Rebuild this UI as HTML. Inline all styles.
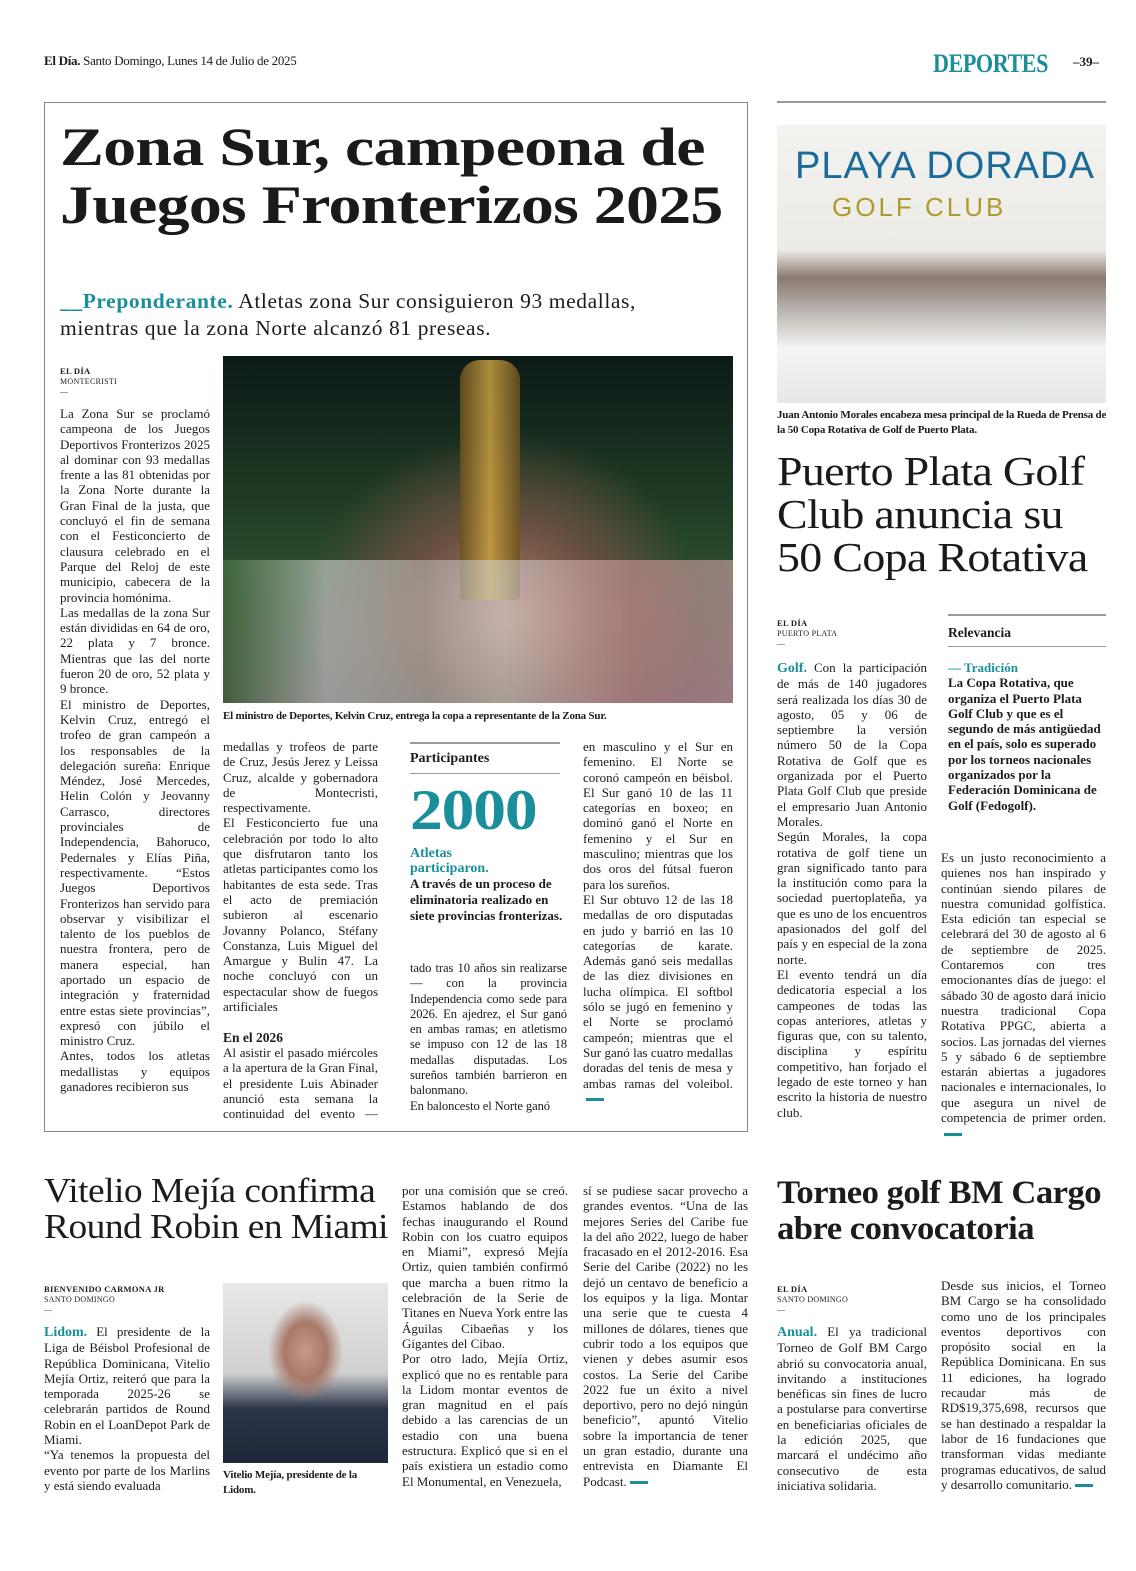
<!DOCTYPE html>
<html><head><meta charset="utf-8">
<style>
*{margin:0;padding:0;box-sizing:border-box}
body{width:1136px;height:1571px;background:#fff;position:relative;overflow:hidden;font-family:"Liberation Serif",serif;color:#1c1c1c}
.a{position:absolute}
.t{font-size:13px;line-height:15.3px;text-align:justify;letter-spacing:0;overflow:hidden;hyphens:auto}
.t p{margin:0}
.tl{color:#1a8f9b;font-weight:bold}
.by{font-size:8px;line-height:10px;letter-spacing:.3px}
.by b{font-size:8.5px}
.cap{font-size:11px;font-weight:bold;line-height:15px;letter-spacing:-0.2px}
.end{display:inline-block;width:18px;height:3px;background:#1a8f9b;vertical-align:middle;margin-left:3px}
.sx{transform-origin:left top;white-space:nowrap}
</style></head><body>

<div class="a" style="left:44px;top:53px;font-size:13px;letter-spacing:-0.3px"><b>El Día.</b> Santo Domingo, Lunes 14 de Julio de 2025</div>
<div class="a" style="left:933px;top:49px;font-size:26px;font-weight:bold;color:#1a8f9b;letter-spacing:-0.5px;transform:scaleX(.85);transform-origin:left">DEPORTES</div>
<div class="a" style="left:1073px;top:54px;font-size:13px;font-weight:bold">–39–</div>

<div class="a" style="left:44px;top:102px;width:704px;height:1030px;border:1px solid #888"></div>
<div class="a" style="left:777px;top:101px;width:329px;height:2px;background:#999"></div>

<div class="a sx" style="left:60px;top:118px;font-size:54px;font-weight:bold;line-height:58px;letter-spacing:-0.6px;color:#1a1a1a;transform:scaleX(1.22)">Zona Sur, campeona de<br>Juegos Fronterizos 2025</div>
<div class="a" style="left:60px;top:288px;width:660px;font-size:21.5px;line-height:27px;letter-spacing:0.6px"><span class="tl" style="color:#1a8f9b">__Preponderante.</span> Atletas zona Sur consiguieron 93 medallas, mientras que la zona Norte alcanzó 81 preseas.</div>

<div class="a by" style="left:60px;top:366px"><b>EL DÍA</b><br>MONTECRISTI<br>—</div>

<div class="a" style="left:223px;top:356px;width:510px;height:347px;background:radial-gradient(ellipse at 55% 75%,#b08070 0%,#6a5040 25%,transparent 50%),linear-gradient(180deg,#0c1a16 0%,#1e3a24 40%,#2a4a2e 60%,#3a3a38 100%)"></div>
<div class="a" style="left:460px;top:360px;width:60px;height:240px;background:linear-gradient(90deg,#6a5020,#c8a040,#6a5020);border-radius:20px 20px 4px 4px;opacity:.85"></div>
<div class="a" style="left:223px;top:560px;width:510px;height:143px;background:linear-gradient(90deg,#4a7a40 0%,#e8e8e8 20%,#c0c0c0 40%,#d8d8d8 55%,#e0a0a8 80%,#e8b0b8 100%);opacity:.55"></div>
<div class="a cap" style="left:223px;top:709px">El ministro de Deportes, Kelvin Cruz, entrega la copa a representante de la Zona Sur.</div>

<div class="a t" style="left:60px;top:406px;width:150px;height:716px">
<p>La Zona Sur se proclamó campeona de los Juegos Deportivos Fronterizos 2025 al dominar con 93 medallas frente a las 81 obtenidas por la Zona Norte durante la Gran Final de la justa, que concluyó el fin de semana con el Festiconcierto de clausura celebrado en el Parque del Reloj de este municipio, cabecera de la provincia homónima.</p>
<p>Las medallas de la zona Sur están divididas en 64 de oro, 22 plata y 7 bronce. Mientras que las del norte fueron 20 de oro, 52 plata y 9 bronce.</p>
<p>El ministro de Deportes, Kelvin Cruz, entregó el trofeo de gran campeón a los responsables de la delegación sureña: Enrique Méndez, José Mercedes, Helin Colón y Jeovanny Carrasco, directores provinciales de Independencia, Bahoruco, Pedernales y Elías Piña, respectivamente. “Estos Juegos Deportivos Fronterizos han servido para observar y visibilizar el talento de los pueblos de nuestra frontera, pero de manera especial, han aportado un espacio de integración y fraternidad entre estas siete provincias”, expresó con júbilo el ministro Cruz.</p>
<p>Antes, todos los atletas medallistas y equipos ganadores recibieron sus</p></div>

<div class="a t" style="left:223px;top:739px;width:155px;height:383px">
<p>medallas y trofeos de parte de Cruz, Jesús Jerez y Leissa Cruz, alcalde y gobernadora de Montecristi, respectivamente.</p>
<p>El Festiconcierto fue una celebración por todo lo alto que disfrutaron tanto los atletas participantes como los habitantes de esta sede. Tras el acto de premiación subieron al escenario Jovanny Polanco, Stéfany Constanza, Luis Miguel del Amargue y Bulin 47. La noche concluyó con un espectacular show de fuegos artificiales</p>
<p>&nbsp;</p>
<p style="font-weight:bold;font-size:13.5px">En el 2026</p>
<p>Al asistir el pasado miércoles a la apertura de la Gran Final, el presidente Luis Abinader anunció esta semana la continuidad del evento —resca-</p></div>

<div class="a" style="left:410px;top:742px;width:150px;height:2px;background:#999"></div>
<div class="a" style="left:410px;top:751px;font-size:14px;font-weight:bold">Participantes</div>
<div class="a" style="left:410px;top:773px;width:150px;height:1px;background:#999"></div>
<div class="a sx" style="left:410px;top:780px;font-size:57px;font-weight:bold;color:#1a8f9b;line-height:62px;letter-spacing:-1px;transform:scaleX(1.15)">2000</div>
<div class="a" style="left:410px;top:846px;width:155px;font-size:14px;line-height:15px;font-weight:bold"><span style="color:#1a8f9b">Atletas<br>participaron.</span><br><span style="font-size:13px">A través de un proceso de eliminatoria realizado en siete provincias fronterizas.</span></div>

<div class="a t" style="left:410px;top:961px;width:157px;height:161px;font-size:12.6px;letter-spacing:-0.1px">
<p>tado tras 10 años sin realizarse— con la provincia Independencia como sede para 2026. En ajedrez, el Sur ganó en ambas ramas; en atletismo se impuso con 12 de las 18 medallas disputadas. Los sureños también barrieron en balonmano.</p>
<p>En baloncesto el Norte ganó</p></div>

<div class="a t" style="left:583px;top:739px;width:150px;height:383px">
<p>en masculino y el Sur en femenino. El Norte se coronó campeón en béisbol. El Sur ganó 10 de las 11 categorías en boxeo; en dominó ganó el Norte en femenino y el Sur en masculino; mientras que los dos oros del fútsal fueron para los sureños.</p>
<p>El Sur obtuvo 12 de las 18 medallas de oro disputadas en judo y barrió en las 10 categorías de karate. Además ganó seis medallas de las diez divisiones en lucha olímpica. El softbol sólo se jugó en femenino y el Norte se proclamó campeón; mientras que el Sur ganó las cuatro medallas doradas del tenis de mesa y ambas ramas del voleibol.<span class="end"></span></p></div>

<!-- right top -->
<div class="a" style="left:777px;top:125px;width:329px;height:278px;background:linear-gradient(180deg,#f2f2ef 0%,#ecebe6 45%,#8a7a70 55%,#c8c4c0 70%,#f4f4f4 80%,#e8e8e8 100%)"></div>
<div class="a" style="left:795px;top:142px;font-family:'Liberation Sans',sans-serif;font-size:38px;color:#1a6a9a;letter-spacing:1px;line-height:48px;white-space:nowrap">PLAYA DORADA</div>
<div class="a" style="left:832px;top:192px;font-family:'Liberation Sans',sans-serif;font-size:26px;color:#b09a30;letter-spacing:3px;white-space:nowrap">GOLF CLUB</div>
<div class="a cap" style="left:777px;top:408px;width:330px">Juan Antonio Morales encabeza mesa principal de la Rueda de Prensa de la 50 Copa Rotativa de Golf de Puerto Plata.</div>
<div class="a sx" style="left:777px;top:450px;font-size:41px;line-height:43px;letter-spacing:-0.6px;color:#1a1a1a;transform:scaleX(1.12)">Puerto Plata Golf<br>Club anuncia su<br>50 Copa Rotativa</div>

<div class="a by" style="left:777px;top:618px"><b>EL DÍA</b><br>PUERTO PLATA<br>—</div>
<div class="a t" style="left:777px;top:660px;width:150px;height:476px">
<p><span class="tl" style="font-size:14px">Golf.</span> Con la participación de más de 140 jugadores será realizada los días 30 de agosto, 05 y 06 de septiembre la versión número 50 de la Copa Rotativa de Golf que es organizada por el Puerto Plata Golf Club que preside el empresario Juan Antonio Morales.</p>
<p>Según Morales, la copa rotativa de golf tiene un gran significado tanto para la institución como para la sociedad puertoplateña, ya que es uno de los encuentros apasionados del golf del país y en especial de la zona norte.</p>
<p>El evento tendrá un día dedicatoria especial a los campeones de todas las copas anteriores, atletas y figuras que, con su talento, disciplina y espíritu competitivo, han forjado el legado de este torneo y han escrito la historia de nuestro club.</p></div>

<div class="a" style="left:948px;top:614px;width:158px;height:2px;background:#999"></div>
<div class="a" style="left:948px;top:625px;font-size:13.5px;font-weight:bold">Relevancia</div>
<div class="a" style="left:948px;top:646px;width:158px;height:1px;background:#999"></div>
<div class="a t" style="left:948px;top:660px;width:158px;height:180px;font-weight:bold;text-align:left;font-size:13px">
<p class="tl">— Tradición</p>
<p>La Copa Rotativa, que organiza el Puerto Plata Golf Club y que es el segundo de más antigüedad en el país, solo es superado por los torneos nacionales organizados por la Federación Dominicana de Golf (Fedogolf).</p></div>
<div class="a t" style="left:941px;top:850px;width:165px;height:286px">
<p>Es un justo reconocimiento a quienes nos han inspirado y continúan siendo pilares de nuestra comunidad golfística. Esta edición tan especial se celebrará del 30 de agosto al 6 de septiembre de 2025. Contaremos con tres emocionantes días de juego: el sábado 30 de agosto dará inicio nuestra tradicional Copa Rotativa PPGC, abierta a socios. Las jornadas del viernes 5 y sábado 6 de septiembre estarán abiertas a jugadores nacionales e internacionales, lo que asegura un nivel de competencia de primer orden.<span class="end"></span></p></div>

<!-- bottom -->
<div class="a sx" style="left:44px;top:1173px;font-size:35px;line-height:36px;letter-spacing:-0.5px;transform:scaleX(1.07)">Vitelio Mejía confirma<br>Round Robin en Miami</div>
<div class="a by" style="left:44px;top:1284px"><b>BIENVENIDO CARMONA JR</b><br>SANTO DOMINGO<br>—</div>
<div class="a t" style="left:44px;top:1324px;width:166px;height:180px">
<p><span class="tl" style="font-size:14px">Lidom.</span> El presidente de la Liga de Béisbol Profesional de República Dominicana, Vitelio Mejía Ortiz, reiteró que para la temporada 2025-26 se celebrarán partidos de Round Robin en el LoanDepot Park de Miami.</p>
<p>“Ya tenemos la propuesta del evento por parte de los Marlins y está siendo evaluada</p></div>
<div class="a" style="left:223px;top:1283px;width:165px;height:180px;background:radial-gradient(ellipse at 50% 38%,#c89a88 0%,#a87868 18%,transparent 32%),linear-gradient(180deg,#e8e8e8 0%,#d0d0d0 50%,#2a3448 70%,#1e2838 100%)"></div>
<div class="a cap" style="left:223px;top:1468px;width:165px">Vitelio Mejía, presidente de la Lidom.</div>

<div class="a t" style="left:402px;top:1183px;width:166px;height:320px">
<p>por una comisión que se creó. Estamos hablando de dos fechas inaugurando el Round Robin con los cuatro equipos en Miami”, expresó Mejía Ortiz, quien también confirmó que marcha a buen ritmo la celebración de la Serie de Titanes en Nueva York entre las Águilas Cibaeñas y los Gigantes del Cibao.</p>
<p>Por otro lado, Mejía Ortiz, explicó que no es rentable para la Lidom montar eventos de gran magnitud en el país debido a las carencias de un estadio con una buena estructura. Explicó que si en el país existiera un estadio como El Monumental, en Venezuela,</p></div>
<div class="a t" style="left:583px;top:1183px;width:165px;height:320px">
<p>sí se pudiese sacar provecho a grandes eventos. “Una de las mejores Series del Caribe fue la del año 2022, luego de haber fracasado en el 2012-2016. Esa Serie del Caribe (2022) no les dejó un centavo de beneficio a los equipos y la liga. Montar una serie que te cuesta 4 millones de dólares, tienes que cubrir todo a los equipos que vienen y debes asumir esos costos. La Serie del Caribe 2022 fue un éxito a nivel deportivo, pero no dejó ningún beneficio”, apuntó Vitelio sobre la importancia de tener un gran estadio, durante una entrevista en Diamante El Podcast.<span class="end"></span></p></div>

<div class="a sx" style="left:777px;top:1175px;font-size:33px;font-weight:bold;line-height:36px;letter-spacing:-0.5px;transform:scaleX(1.05)">Torneo golf BM Cargo<br>abre convocatoria</div>
<div class="a by" style="left:777px;top:1284px"><b>EL DÍA</b><br>SANTO DOMINGO<br>—</div>
<div class="a t" style="left:777px;top:1324px;width:150px;height:180px">
<p><span class="tl" style="font-size:14px">Anual.</span> El ya tradicional Torneo de Golf BM Cargo abrió su convocatoria anual, invitando a instituciones benéficas sin fines de lucro a postularse para convertirse en beneficiarias oficiales de la edición 2025, que marcará el undécimo año consecutivo de esta iniciativa solidaria.</p></div>
<div class="a t" style="left:941px;top:1278px;width:165px;height:226px">
<p>Desde sus inicios, el Torneo BM Cargo se ha consolidado como uno de los principales eventos deportivos con propósito social en la República Dominicana. En sus 11 ediciones, ha logrado recaudar más de RD$19,375,698, recursos que se han destinado a respaldar la labor de 16 fundaciones que transforman vidas mediante programas educativos, de salud y desarrollo comunitario.<span class="end"></span></p></div>
</body></html>
